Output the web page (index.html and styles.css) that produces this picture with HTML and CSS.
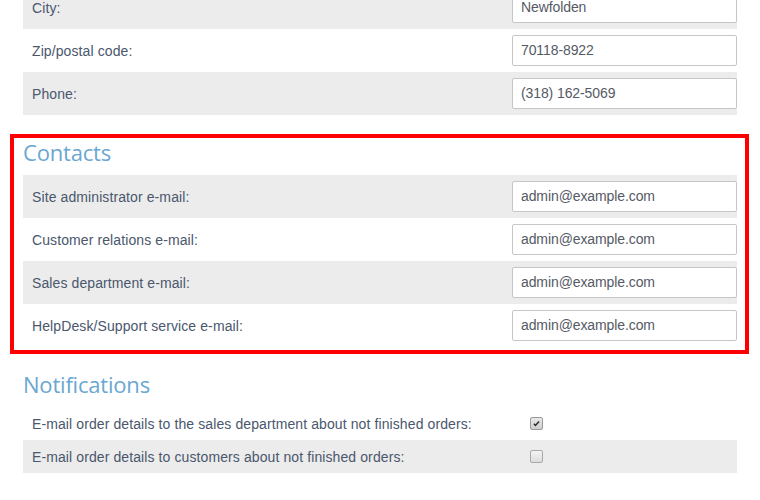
FILE: index.html
```html
<!DOCTYPE html>
<html>
<head>
<meta charset="utf-8">
<link rel="stylesheet" href="styles.css">
</head>
<body>
<div class="page">
  <div class="rows first">
    <div class="row alt"><span class="label">City:</span><div class="control"><div class="input">Newfolden</div></div></div>
    <div class="row"><span class="label">Zip/postal code:</span><div class="control"><div class="input">70118-8922</div></div></div>
    <div class="row alt"><span class="label">Phone:</span><div class="control"><div class="input">(318) 162-5069</div></div></div>
  </div>

  <section class="section highlighted">
    <h2 class="heading">Contacts</h2>
    <div class="rows">
      <div class="row alt"><span class="label">Site administrator e-mail:</span><div class="control"><div class="input">admin@example.com</div></div></div>
      <div class="row"><span class="label">Customer relations e-mail:</span><div class="control"><div class="input">admin@example.com</div></div></div>
      <div class="row alt"><span class="label">Sales department e-mail:</span><div class="control"><div class="input">admin@example.com</div></div></div>
      <div class="row"><span class="label">HelpDesk/Support service e-mail:</span><div class="control"><div class="input">admin@example.com</div></div></div>
    </div>
    <div class="highlight-box"></div>
  </section>

  <section class="section">
    <h2 class="heading">Notifications</h2>
    <div class="rows">
      <div class="row small"><span class="label">E-mail order details to the sales department about not finished orders:</span><div class="control"><span class="checkbox checked"><svg viewBox="0 0 12 12" width="12" height="12"><path d="M2.6 6.4 L4.6 8.6 L9.4 3.2" fill="none" stroke="#2b2b2b" stroke-width="2"/></svg></span></div></div>
      <div class="row small alt"><span class="label">E-mail order details to customers about not finished orders:</span><div class="control"><span class="checkbox"></span></div></div>
    </div>
  </section>
</div>
</body>
</html>
```

FILE: styles.css
```css
html, body {
  margin: 0;
  padding: 0;
  background: #ffffff;
}

.page {
  width: 714px;
  margin-left: 23px;
  font-family: "Liberation Sans", Arial, sans-serif;
  font-size: 14px;
  color: #4a576d;
}

.rows.first {
  margin-top: -14px;
}

.row {
  display: flex;
  align-items: center;
  height: 43px;
  box-sizing: border-box;
  padding-left: 9px;
}

.row.alt {
  background: #ececec;
}

.row.small {
  height: 33px;
}

.label {
  flex: 1;
  white-space: nowrap;
  letter-spacing: 0.1px;
}

.control {
  width: 225px;
  flex: none;
}

.input {
  height: 31px;
  box-sizing: border-box;
  border: 1px solid #c6c6c6;
  border-radius: 2px;
  background: #ffffff;
  padding: 0 8px;
  line-height: 29px;
  color: #555a64;
  font-size: 14px;
  letter-spacing: -0.1px;
}

.section {
  position: relative;
}

.heading {
  margin: 23px 0 7px;
  height: 30px;
  line-height: 29px;
  font-family: "Open Sans", "Noto Sans", sans-serif;
  font-weight: normal;
  font-size: 22px;
  color: #6aa7d2;
  letter-spacing: -0.2px;
}

.highlight-box {
  position: absolute;
  top: -4px;
  left: -13px;
  right: -12px;
  bottom: -7px;
  border: 4px solid #ff0000;
  pointer-events: none;
}

.checkbox {
  display: flex;
  align-items: center;
  justify-content: center;
  width: 11px;
  height: 11px;
  margin-left: 18px;
  border: 1px solid #a9a9a9;
  border-radius: 2px;
  background: linear-gradient(#f4f4f4, #dcdcdc);
}

.checkbox.checked {
  background: linear-gradient(#e8e8e8, #cfcfcf);
  border-color: #9a9a9a;
}

.checkbox svg {
  display: block;
  width: 9px;
  height: 9px;
}
```
